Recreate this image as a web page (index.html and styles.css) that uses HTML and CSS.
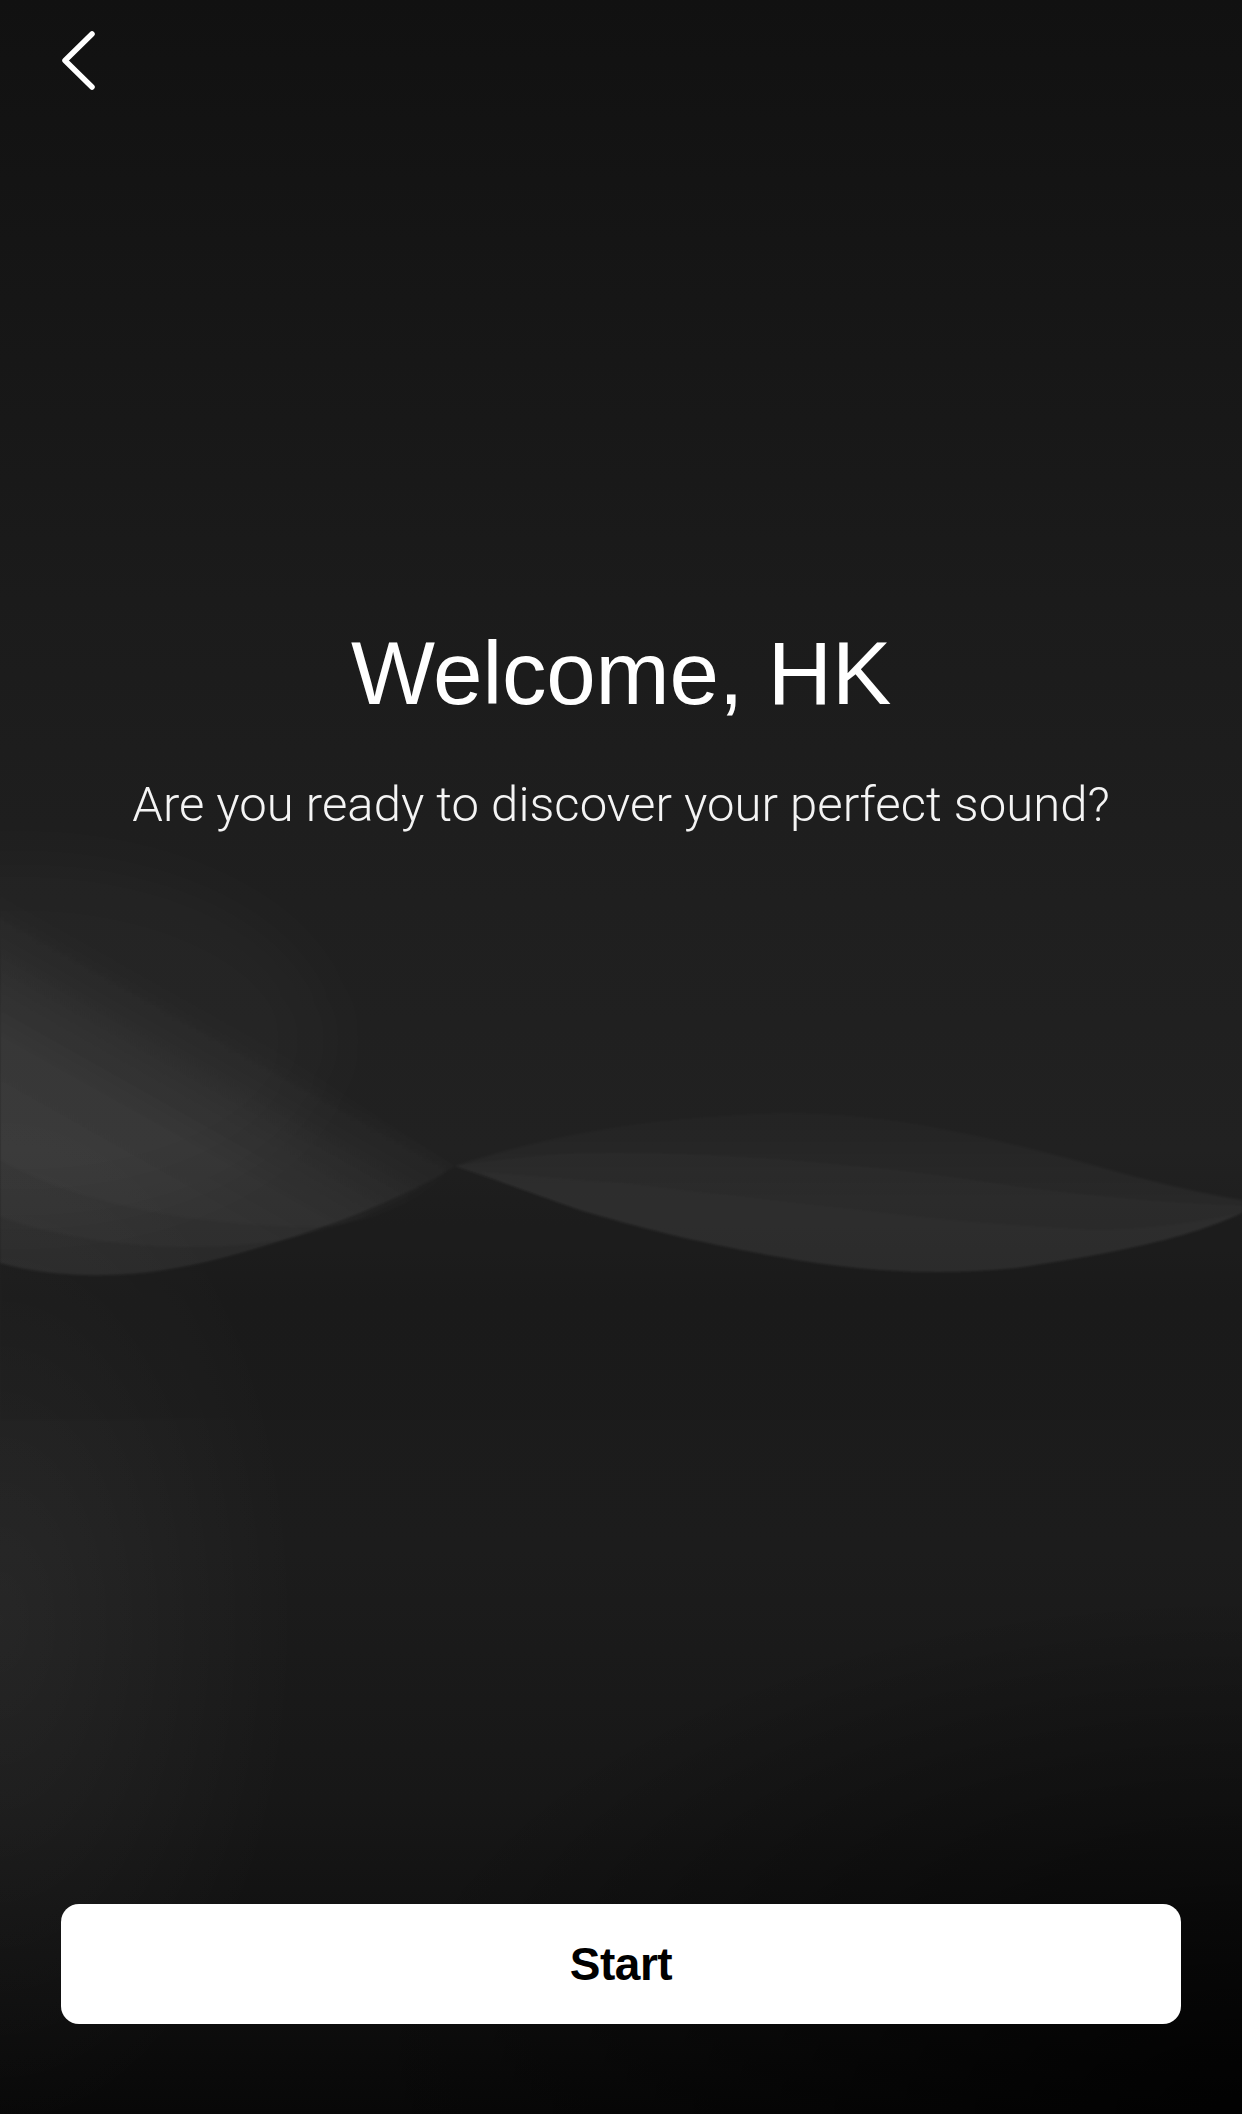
FILE: index.html
```html
<!DOCTYPE html>
<html lang="en">
<head>
<meta charset="utf-8">
<title>Welcome</title>
<link rel="stylesheet" href="styles.css">
</head>
<body>
<div class="screen">
  <svg class="waves" width="1242" height="2114" viewBox="0 0 1242 2114" aria-hidden="true">
    <defs>
      <filter id="soft" x="-30%" y="-30%" width="160%" height="160%">
        <feGaussianBlur stdDeviation="30"/>
      </filter>
      <filter id="edge" x="-5%" y="-5%" width="110%" height="110%">
        <feGaussianBlur stdDeviation="1.2"/>
      </filter>
      <linearGradient id="leftFade" x1="250" y1="1030" x2="160" y2="1190" gradientUnits="userSpaceOnUse">
        <stop offset="0" stop-color="#ffffff" stop-opacity="0"/>
        <stop offset="0.7" stop-color="#ffffff" stop-opacity="0.055"/>
        <stop offset="1" stop-color="#ffffff" stop-opacity="0.06"/>
      </linearGradient>
      <linearGradient id="rightFade" x1="800" y1="1112" x2="800" y2="1200" gradientUnits="userSpaceOnUse">
        <stop offset="0" stop-color="#ffffff" stop-opacity="0.012"/>
        <stop offset="1" stop-color="#ffffff" stop-opacity="0.04"/>
      </linearGradient>
    </defs>

    <!-- broad soft wash in the upper left -->
    <ellipse cx="20" cy="1040" rx="300" ry="170" fill="#ffffff" fill-opacity="0.025" filter="url(#soft)"/>

    <!-- left band: soft upper edge, crisp lower edges -->
    <path d="M455 1166 C380 1120 200 1000 0 860 L0 1263 C60 1280 140 1280 222 1258 C320 1232 400 1200 455 1166 Z" fill="url(#leftFade)" filter="url(#edge)"/>
    <path d="M455 1166 C380 1120 200 1000 0 860 L0 1217 C80 1245 200 1258 300 1236 C370 1220 420 1192 455 1166 Z" fill="url(#leftFade)" fill-opacity="0.3" filter="url(#edge)"/>
    <path d="M455 1166 C380 1120 200 1000 0 860 L0 1160 C80 1205 200 1226 317 1227 C390 1222 430 1190 455 1166 Z" fill="url(#leftFade)" fill-opacity="0.25" filter="url(#edge)"/>

    <!-- right band -->
    <path d="M455 1166 C540 1138 640 1118 780 1113 C900 1112 1020 1145 1136 1177 C1180 1188 1215 1196 1242 1200 L1242 1213 C1200 1232 1150 1248 1017 1268 C940 1276 860 1272 779 1257 C700 1243 640 1228 580 1210 C530 1192 490 1178 455 1166 Z" fill="url(#rightFade)" filter="url(#edge)"/>
    <path d="M455 1166 C520 1158 560 1152 621 1153 C700 1154 760 1158 819 1163 C900 1170 960 1178 1017 1187 C1100 1197 1170 1204 1242 1206 L1242 1213 C1200 1232 1150 1248 1017 1268 C940 1276 860 1272 779 1257 C700 1243 640 1228 580 1210 C530 1192 490 1178 455 1166 Z" fill="#ffffff" fill-opacity="0.014" filter="url(#edge)"/>
    <path d="M480 1172 C540 1176 580 1180 621 1183 C700 1192 780 1202 859 1210 C940 1220 1020 1226 1096 1230 C1150 1229 1200 1222 1242 1213 C1200 1232 1150 1248 1017 1268 C940 1276 860 1272 779 1257 C700 1243 640 1228 580 1210 C530 1194 500 1182 480 1172 Z" fill="#ffffff" fill-opacity="0.012" filter="url(#edge)"/>

    <!-- darker area below the waves -->
    <path d="M0 1263 C60 1280 140 1280 222 1258 C320 1232 400 1200 455 1166 C490 1178 530 1192 580 1210 C640 1228 700 1243 779 1257 C860 1272 940 1276 1017 1268 C1150 1248 1200 1232 1242 1213 L1242 1420 L0 1420 Z" fill="#000000" fill-opacity="0.05" filter="url(#edge)"/>
  </svg>

  <header class="topbar">
    <button class="back" type="button" aria-label="Back">
      <svg width="40" height="62" viewBox="0 0 40 62" aria-hidden="true">
        <path d="M31 3 L4 29.5 L31 56" fill="none" stroke="#ffffff" stroke-width="5.5" stroke-linecap="round" stroke-linejoin="round"/>
      </svg>
    </button>
  </header>

  <main class="intro">
    <h1 class="intro-title">Welcome, HK</h1>
    <p class="intro-text">Are you ready to discover your perfect sound?</p>
  </main>

  <div class="actions">
    <button class="start" type="button">Start</button>
  </div>
</div>
</body>
</html>
```

FILE: styles.css
```css
* {
  box-sizing: border-box;
}

html, body {
  margin: 0;
  padding: 0;
  background: #0a0a0a;
}

.screen {
  position: relative;
  width: 1242px;
  height: 2114px;
  display: flex;
  flex-direction: column;
  overflow: hidden;
  font-family: "Liberation Sans", Arial, sans-serif;
  color: #ffffff;
  background:
    radial-gradient(ellipse 300px 520px at 0px 1620px, rgba(255,255,255,0.05), rgba(255,255,255,0) 100%),
    radial-gradient(ellipse 900px 520px at 1242px 2114px, rgba(0,0,0,0.8), rgba(0,0,0,0) 100%),
    linear-gradient(180deg, #111111 0px, #161616 300px, #1b1b1b 600px, #1f1f1f 900px, #212121 1150px, #1b1b1b 1300px, #1c1c1c 1550px, #171717 1800px, #0e0e0e 2000px, #080808 2114px);
}

.waves {
  position: absolute;
  left: 0;
  top: 0;
  pointer-events: none;
}

.topbar {
  position: relative;
  display: flex;
  padding: 31px 0 0 61px;
}

.back {
  display: flex;
  padding: 0;
  margin: 0;
  border: 0;
  background: transparent;
  cursor: pointer;
}

.intro {
  position: relative;
  display: flex;
  flex-direction: column;
  align-items: center;
  margin-top: 529px;
}

.intro-title {
  margin: 0;
  font-family: "Liberation Sans", Arial, sans-serif;
  font-weight: 400;
  font-size: 89px;
  line-height: 102px;
  letter-spacing: -0.2px;
}

.intro-text {
  margin: 53px 0 0;
  font-family: Roboto, "Liberation Sans", sans-serif;
  font-weight: 300;
  font-size: 49px;
  line-height: 56px;
  letter-spacing: 0.05px;
  color: #f4f4f4;
}

.actions {
  position: relative;
  margin-top: auto;
  padding: 0 61px 90px;
}

.start {
  display: flex;
  align-items: center;
  justify-content: center;
  width: 100%;
  height: 120px;
  padding: 0;
  border: 0;
  border-radius: 18px;
  background: #ffffff;
  color: #000000;
  font-family: "Liberation Sans", Arial, sans-serif;
  font-weight: 700;
  font-size: 46px;
  letter-spacing: -0.5px;
  cursor: pointer;
}
```
